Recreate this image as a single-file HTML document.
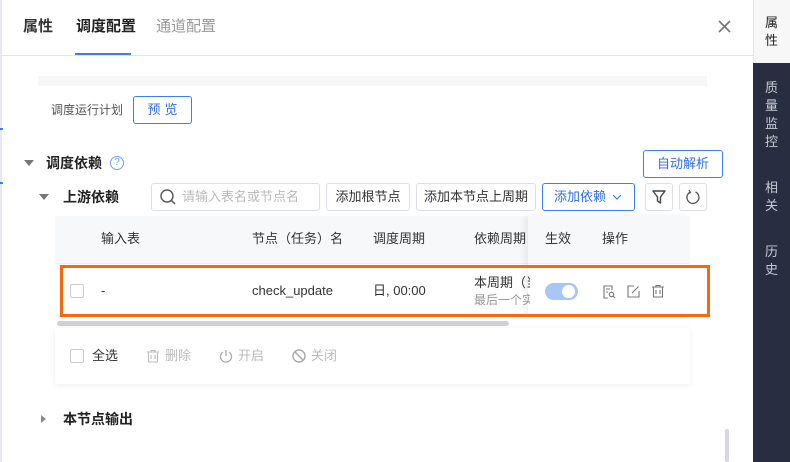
<!DOCTYPE html>
<html><head><meta charset="utf-8"><style>
*{box-sizing:border-box;margin:0;padding:0}
body{width:790px;height:462px;overflow:hidden;background:#fff;font-family:"Liberation Sans","Noto Sans CJK SC",sans-serif;position:relative;color:#333}
.a{position:absolute}
.t{font-size:13px;white-space:nowrap;line-height:18px}
.btn{position:absolute;border:1px solid #dcdfe6;border-radius:3px;background:#fff;font-size:13px;color:#333;text-align:center;line-height:26px;height:28px}
.blue{border-color:#3a7ff6;color:#2f6fe8}
</style></head><body>
<div class="a" style="left:0;top:0;width:2px;height:462px;background:#e8e9ee"></div>
<div class="a" style="left:0;top:128px;width:3px;height:2px;background:#3a7ff6"></div>
<div class="a" style="left:0;top:182px;width:3px;height:2px;background:#3a7ff6"></div>
<!-- tabs -->
<div class="a t" style="left:23px;top:17px;font-size:15px;line-height:20px;font-weight:bold;color:#333">属性</div>
<div class="a t" style="left:76px;top:17px;font-size:15px;line-height:20px;font-weight:bold;color:#222">调度配置</div>
<div class="a t" style="left:156px;top:17px;font-size:15px;line-height:20px;color:#999">通道配置</div>
<div class="a" style="left:75px;top:53px;width:56px;height:2px;background:#3a7ff6"></div>
<div class="a" style="left:0;top:55px;width:753px;height:1px;background:#e4e4e4"></div>
<svg class="a" style="left:718px;top:20px" width="13" height="13" viewBox="0 0 13 13"><path d="M1 1L12 12M12 1L1 12" stroke="#777" stroke-width="1.6"/></svg>
<!-- sidebar -->
<div class="a" style="left:753px;top:0;width:37px;height:63px;background:#f7f7f8;border-left:1px solid #e6e6e6"></div>
<div class="a" style="left:765px;top:14px;font-size:13px;line-height:18px;width:14px;color:#222">属性</div>
<div class="a" style="left:753px;top:63px;width:37px;height:399px;background:#292d40"></div>
<div class="a" style="left:765px;top:79px;font-size:13px;line-height:18px;width:14px;color:#c8cad3">质量监控</div>
<div class="a" style="left:765px;top:179px;font-size:13px;line-height:18px;width:14px;color:#c8cad3">相关</div>
<div class="a" style="left:765px;top:243px;font-size:13px;line-height:18px;width:14px;color:#c8cad3">历史</div>
<!-- band -->
<div class="a" style="left:38px;top:76px;width:669px;height:10px;background:#f7f7f7"></div>
<div class="a t" style="left:51px;top:101px;color:#555;font-size:12px">调度运行计划</div>
<div class="btn blue" style="left:133px;top:96px;width:59px;height:28px;letter-spacing:4px;padding-left:4px">预览</div>
<!-- 调度依赖 -->
<div class="a" style="left:24px;top:160px;border-left:5px solid transparent;border-right:5px solid transparent;border-top:6px solid #777"></div>
<div class="a t" style="left:46px;top:153px;font-size:14px;line-height:20px;font-weight:bold;color:#222">调度依赖</div>
<div class="a" style="left:110px;top:156px;width:14px;height:14px;border:1px solid #6fa0f5;border-radius:50%;font-size:10px;color:#6fa0f5;text-align:center;line-height:12px">?</div>
<div class="btn blue" style="left:643px;top:150px;width:80px;height:28px">自动解析</div>
<div class="a" style="left:39px;top:194px;border-left:5px solid transparent;border-right:5px solid transparent;border-top:6px solid #777"></div>
<div class="a t" style="left:63px;top:187px;font-size:14px;line-height:20px;font-weight:bold;color:#222">上游依赖</div>
<div class="btn" style="left:151px;top:183px;width:169px;text-align:left;padding-left:30px;color:#bbb">请输入表名或节点名</div>
<svg class="a" style="left:159px;top:188px" width="18" height="18" viewBox="0 0 18 18"><circle cx="8" cy="8" r="6" fill="none" stroke="#555" stroke-width="1.4"/><path d="M12.5 12.5L16 16" stroke="#555" stroke-width="1.5"/></svg>
<div class="btn" style="left:326px;top:183px;width:84px">添加根节点</div>
<div class="btn" style="left:416px;top:183px;width:120px">添加本节点上周期</div>
<div class="btn blue" style="left:542px;top:183px;width:93px;text-align:left;padding-left:11px">添加依赖</div>
<svg class="a" style="left:612px;top:194px" width="10" height="6" viewBox="0 0 10 6"><path d="M1 1L5 5L9 1" fill="none" stroke="#3a7ff6" stroke-width="1.2"/></svg>
<div class="btn" style="left:645px;top:183px;width:28px"></div>
<svg class="a" style="left:651px;top:189px" width="16" height="16" viewBox="0 0 16 16"><path d="M2 2H14L9.5 8V14L6.5 12V8Z" fill="none" stroke="#444" stroke-width="1.4" stroke-linejoin="round"/></svg>
<div class="btn" style="left:679px;top:183px;width:28px"></div>
<svg class="a" style="left:685px;top:189px" width="16" height="16" viewBox="0 0 16 16"><path d="M10.5 3A6 6 0 1 1 5 3.2" fill="none" stroke="#555" stroke-width="1.3"/><path d="M4 1L5.5 3.5L3 5" fill="none" stroke="#555" stroke-width="1.2"/></svg>
<!-- table -->
<div class="a" style="left:55px;top:216px;width:635px;height:47px;background:#f7f8fa"></div>
<div class="a" style="left:55px;top:263px;width:635px;height:1px;background:#eee"></div>
<div class="a t" style="left:101px;top:230px">输入表</div>
<div class="a t" style="left:252px;top:230px">节点（任务）名</div>
<div class="a t" style="left:373px;top:230px">调度周期</div>
<div class="a t" style="left:474px;top:230px">依赖周期</div>
<div class="a" style="left:528px;top:216px;width:162px;height:100px;box-shadow:-4px 0 6px rgba(0,0,0,.06)"></div>
<div class="a t" style="left:545px;top:230px">生效</div>
<div class="a t" style="left:602px;top:230px">操作</div>
<div class="a" style="left:60px;top:265px;width:650px;height:52px;border:3px solid #f26b10"></div>
<div class="a" style="left:70px;top:284px;width:14px;height:14px;border:1px solid #ccc;border-radius:2px;background:#fff"></div>
<div class="a t" style="left:101px;top:282px">-</div>
<div class="a t" style="left:252px;top:282px">check_update</div>
<div class="a t" style="left:373px;top:282px">日, 00:00</div>
<div class="a t" style="left:474px;top:274px;width:56px;overflow:hidden">本周期（当</div>
<div class="a t" style="left:474px;top:291px;width:56px;overflow:hidden;color:#999;font-size:12px">最后一个实</div>
<div class="a" style="left:545px;top:283px;width:33px;height:17px;border-radius:9px;background:#a9c6f8"></div>
<div class="a" style="left:562px;top:285px;width:13px;height:13px;border-radius:50%;background:#fff"></div>
<svg class="a" style="left:602px;top:285px" width="14" height="14" viewBox="0 0 14 14" fill="none" stroke="#777" stroke-width="1.1"><path d="M10 5V1H2V13H6"/><path d="M4 4H8M4 7H6"/><circle cx="9.5" cy="9.5" r="2.2"/><path d="M11 11L13 13"/></svg>
<svg class="a" style="left:627px;top:285px" width="13" height="13" viewBox="0 0 13 13" fill="none" stroke="#777" stroke-width="1.1"><path d="M7 1H1V12H12V6"/><path d="M5 8L11.5 1.5"/></svg>
<svg class="a" style="left:652px;top:285px" width="12" height="13" viewBox="0 0 12 13" fill="none" stroke="#777" stroke-width="1.1"><path d="M0 2H12M4 2V0.5H8V2"/><path d="M1.5 2V12H10.5V2"/><path d="M4 5V9M8 5V9"/></svg>
<div class="a" style="left:57px;top:321px;width:452px;height:5px;border-radius:3px;background:#cfd0db"></div>
<!-- footer panel -->
<div class="a" style="left:55px;top:328px;width:635px;height:56px;background:#fff;box-shadow:0 1px 6px rgba(0,0,0,.07)"></div>
<div class="a" style="left:70px;top:349px;width:14px;height:14px;border:1px solid #ccc;border-radius:2px"></div>
<div class="a t" style="left:92px;top:347px">全选</div>
<svg class="a" style="left:147px;top:350px" width="12" height="13" viewBox="0 0 12 13" fill="none" stroke="#bbb" stroke-width="1.1"><path d="M0 2H12M4 2V0.5H8V2"/><path d="M1.5 2V12H10.5V2"/><path d="M4 5V9M8 5V9"/></svg>
<div class="a t" style="left:165px;top:347px;color:#bbb">删除</div>
<svg class="a" style="left:219px;top:349px" width="14" height="14" viewBox="0 0 14 14" fill="none" stroke="#aaa" stroke-width="1.3"><path d="M4 3A5.5 5.5 0 1 0 10 3"/><path d="M7 1V7"/></svg>
<div class="a t" style="left:238px;top:347px;color:#bbb">开启</div>
<svg class="a" style="left:292px;top:349px" width="14" height="14" viewBox="0 0 14 14" fill="none" stroke="#aaa" stroke-width="1.4"><circle cx="7" cy="7" r="6"/><path d="M3 3L11 11"/></svg>
<div class="a t" style="left:311px;top:347px;color:#bbb">关闭</div>
<div class="a" style="left:41px;top:415px;border-top:4px solid transparent;border-bottom:4px solid transparent;border-left:5px solid #888"></div>
<div class="a t" style="left:63px;top:409px;font-size:14px;line-height:20px;font-weight:bold;color:#222">本节点输出</div>
<div class="a" style="left:725px;top:429px;width:4px;height:33px;border-radius:2px;background:#d6d7e0"></div>
</body></html>
